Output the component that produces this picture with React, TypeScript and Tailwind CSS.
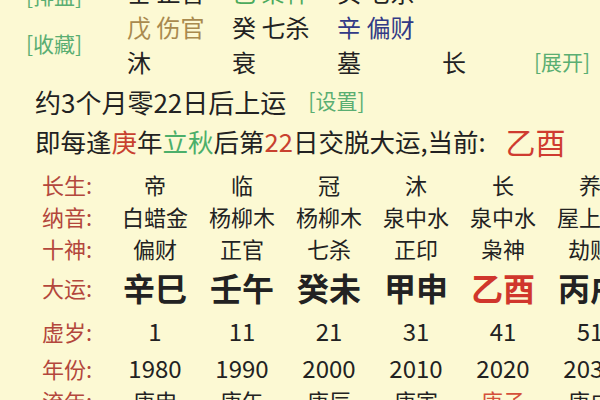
import React from "react";

const F = { fontFamily: '"Noto Sans CJK SC", "Noto Sans", sans-serif' };

function Cell({ children, className = "" }: { children: React.ReactNode; className?: string }) {
  return <div className={`w-[105px] shrink-0 whitespace-nowrap ${className}`}>{children}</div>;
}

const labels = "text-[22px] text-[#b3473c]";

function Row({ label, values, h, valueClass, highlight, hlClass }: { label: string; values: string[]; h: string; valueClass: string; highlight?: number; hlClass?: string }) {
  return (
    <div className={`flex items-center pl-[42px] ${h}`}>
      <div className={`w-[69.5px] shrink-0 whitespace-nowrap ${labels}`}>{label}</div>
      {values.map((v, i) => (
        <div key={i} className={`w-[87px] shrink-0 text-center whitespace-nowrap ${i === highlight ? hlClass : valueClass}`}>{v}</div>
      ))}
    </div>
  );
}

export default function App() {
  return (
    <div style={F} className="w-[600px] h-[400px] overflow-hidden bg-[#fcf9d3] text-[#222222]">
      {/* top block */}
      <div className="flex -mt-[26px]">
        <div className="w-[127px] shrink-0 pl-[26px] pt-[7px] flex flex-col gap-[20px] text-[21px] text-[#5aae72] leading-[28px]">
          <div>[排盘]</div>
          <div>[收藏]</div>
        </div>
        <div className="flex flex-col text-[24px] leading-[35px]">
          <div className="flex h-[35px] items-center">
            <Cell>壬 正官</Cell>
            <Cell className="text-[#4caa5c]">己 枭神</Cell>
            <Cell>癸 七杀</Cell>
          </div>
          <div className="flex h-[35px] items-center">
            <Cell className="text-[#a98a4e]">戊 伤官</Cell>
            <Cell>癸 七杀</Cell>
            <Cell className="text-[#323a86]">辛 偏财</Cell>
          </div>
          <div className="flex h-[35px] items-center">
            <Cell>沐</Cell>
            <Cell>衰</Cell>
            <Cell>墓</Cell>
            <div className="w-[92px] shrink-0">长</div>
            <div className="text-[21px] text-[#5aae72] whitespace-nowrap">[展开]</div>
          </div>
        </div>
      </div>

      <div className="flex items-center h-[40px] mt-[2px] pl-[35px] whitespace-nowrap">
        <span className="text-[26px]">约3个月零22日后上运</span>
        <span className="ml-[22px] text-[21px] text-[#5aae72]">[设置]</span>
      </div>
      <div className="flex items-center h-[40px] pl-[35px] whitespace-nowrap text-[25.5px]">
        <span>即每逢</span>
        <span className="text-[#c8412f]">庚</span>
        <span>年</span>
        <span className="text-[#4caf6a]">立秋</span>
        <span>后第</span>
        <span className="text-[#c8412f]">22</span>
        <span>日交脱大运,当前:</span>
        <span className="ml-[20px] text-[30px] text-[#cf3b30]">乙酉</span>
      </div>

      <div className="mt-[7px]">
        <Row label="长生:" values={["帝", "临", "冠", "沐", "长", "养"]} h="h-[32px]" valueClass="text-[22px]" />
        <Row label="纳音:" values={["白蜡金", "杨柳木", "杨柳木", "泉中水", "泉中水", "屋上土"]} h="h-[32px]" valueClass="text-[22px]" />
        <Row label="十神:" values={["偏财", "正官", "七杀", "正印", "枭神", "劫财"]} h="h-[32px]" valueClass="text-[22px]" />
        <Row label="大运:" values={["辛巳", "壬午", "癸未", "甲申", "乙酉", "丙戌"]} h="h-[46px]" valueClass="text-[32px] font-bold" highlight={4} hlClass="text-[32px] font-bold text-[#d0362c]" />
        <Row label="虚岁:" values={["1", "11", "21", "31", "41", "51"]} h="h-[42px]" valueClass="text-[24px]" />
        <Row label="年份:" values={["1980", "1990", "2000", "2010", "2020", "2030"]} h="h-[32px]" valueClass="text-[24px]" />
        <Row label="流年:" values={["庚申", "庚午", "庚辰", "庚寅", "庚子", "庚戌"]} h="h-[32px]" valueClass="text-[22px]" highlight={4} hlClass="text-[22px] text-[#d4503a]" />
      </div>
    </div>
  );
}
